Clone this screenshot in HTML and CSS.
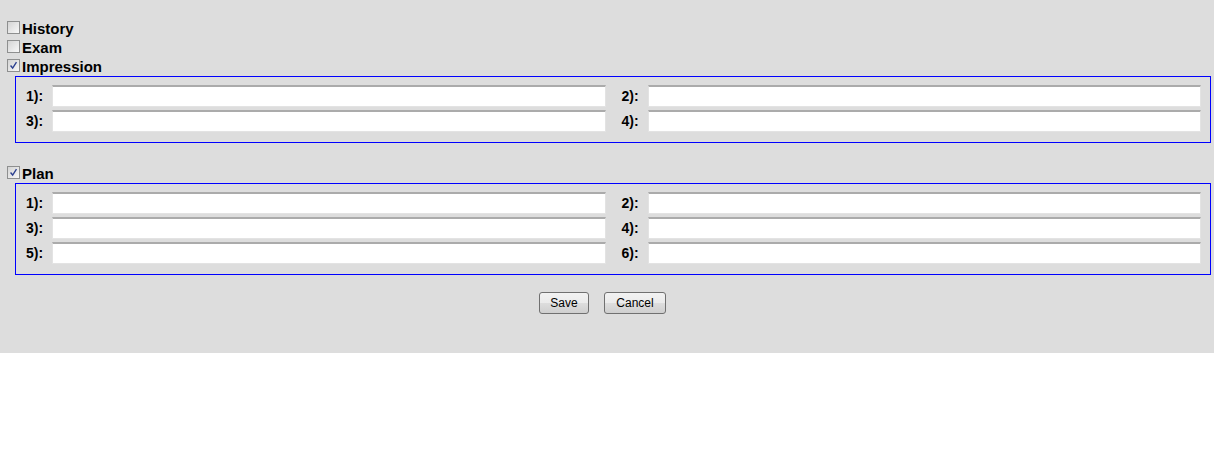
FILE: index.html
```html
<!DOCTYPE html>
<html lang="en">
<head>
  <meta charset="UTF-8" />
  <title>Visit Note</title>
  <link rel="stylesheet" href="styles.css">
</head>
<body>
  <div class="panel">
    <label class="section"><span class="check"></span>History</label>
    <label class="section"><span class="check"></span>Exam</label>
    <label class="section"><span class="check checked"><svg viewBox="0 0 13 13"><path d="M3 6.5 L5.5 9.5 L10 2.5" fill="none" stroke="#2b3f8f" stroke-width="1.6"/></svg></span>Impression</label>
    <div class="box">
      <div class="field"><span class="num">1):</span><input type="text"></div>
      <div class="field"><span class="num">2):</span><input type="text"></div>
      <div class="field"><span class="num">3):</span><input type="text"></div>
      <div class="field"><span class="num">4):</span><input type="text"></div>
    </div>

    <label class="section plan"><span class="check checked"><svg viewBox="0 0 13 13"><path d="M3 6.5 L5.5 9.5 L10 2.5" fill="none" stroke="#2b3f8f" stroke-width="1.6"/></svg></span>Plan</label>
    <div class="box">
      <div class="field"><span class="num">1):</span><input type="text"></div>
      <div class="field"><span class="num">2):</span><input type="text"></div>
      <div class="field"><span class="num">3):</span><input type="text"></div>
      <div class="field"><span class="num">4):</span><input type="text"></div>
      <div class="field"><span class="num">5):</span><input type="text"></div>
      <div class="field"><span class="num">6):</span><input type="text"></div>
    </div>

    <div class="buttons">
      <button class="save">Save</button>
      <button class="cancel">Cancel</button>
    </div>
  </div>
</body>
</html>
```

FILE: styles.css
```css
body { margin: 0; font-family: "Liberation Sans", Arial, sans-serif; background: #fff; color: #000; }
.panel { background: #dddddd; padding: 19px 0 39px 7px; }
.section { display: flex; align-items: center; height: 19px; font-size: 15px; font-weight: bold; }
.section.plan { margin-top: 21px; }
.check { width: 11px; height: 11px; border: 1px solid #8e8f8f; background: linear-gradient(135deg, #d4d4d4, #f8f8f8); margin-right: 2px; position: relative; top: -1px; }
.check svg { display: block; width: 11px; height: 11px; }
.box { border: 1px solid #0000ff; margin: 0 3px 0 8px; padding: 8px 9px 10px 10px; display: grid; grid-template-columns: 1fr 1fr; column-gap: 16px; row-gap: 3px; }
.field { display: flex; align-items: center; }
.num { width: 26px; font-size: 14px; font-weight: bold; }
.field input { flex: 1; height: 22px; box-sizing: border-box; border: 1px solid #e3e3e3; border-top: 2px solid #ababab; background: #fff; padding: 0 2px; margin: 0; }
.buttons { display: flex; justify-content: center; gap: 15px; margin-top: 17px; padding-right: 16px; }
.buttons button { height: 22px; padding: 0; font-family: "Liberation Sans", Arial, sans-serif; font-size: 12px; color: #000; border: 1px solid #707070; border-radius: 3px; background: linear-gradient(#f2f2f2 0%, #ebebeb 50%, #dddddd 51%, #cfcfcf 100%); }
.save { width: 50px; }
.cancel { width: 62px; }
```
